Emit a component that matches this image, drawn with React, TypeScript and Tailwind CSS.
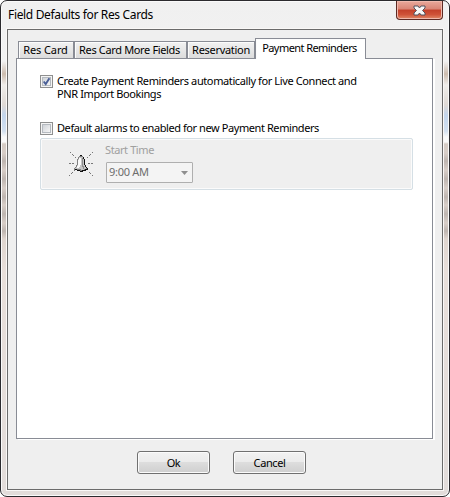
import React from "react";

const tabBase =
  "relative flex items-start justify-center whitespace-nowrap border border-b-0 border-[#898c95] shadow-[inset_1px_1px_0_#fcfcfc]";
const idle = "mb-px h-[17px] pt-px bg-linear-to-b from-[#f2f2f2] to-[#dcdcdc]";

function Tab({ label, className, text }: { label: string; className: string; text: string }) {
  return (
    <button className={`${tabBase} ${className}`}>
      <span className={text}>{label}</span>
    </button>
  );
}

function Check({ checked }: { checked?: boolean }) {
  return (
    <span className="mt-px block h-[13px] w-[13px] shrink-0 border border-[#8e8f8f] bg-[#f4f4f4] p-px">
      <span className="block h-[9px] w-[9px] border border-[#b5bac0] bg-linear-to-br from-[#cfd3d8] to-[#f6f6f6]">
        {checked && (
          <svg viewBox="0 0 9 9" className="-m-px block h-[9px] w-[9px]" fill="none">
            <path d="M1.7 4.5 3.7 7 7.4 1.2" stroke="#4a5f97" strokeWidth="1.9" />
          </svg>
        )}
      </span>
    </span>
  );
}

function Bell() {
  return (
    <svg width="25" height="25" viewBox="0 0 25 25" shapeRendering="crispEdges">
      <path
        fill="#777"
        d="M2 1h1v1H2zM4 3h1v1H4zM5 4h1v1H5zM7 6h1v1H7zM24 1h1v1h-1zM22 3h1v1h-1zM21 4h1v1h-1zM19 6h1v1h-1zM1 24h1v1H1zM3 22h1v1H3zM4 21h1v1H4zM6 19h1v1H6zM24 24h1v1h-1zM22 22h1v1h-1zM21 21h1v1h-1zM1 12h2v1H1zM4 12h2v1H4zM20 12h2v1h-2zM23 12h2v1h-2z"
      />
      <path
        fill="#808080"
        d="M12 4h2v1h1v1h1v2h1v6h1v2h1v1h1v2h-2v1h-3v1h-3v-1H9v-1H6v-2h1v-1h1v-2h1V8h1V6h1V5h1z"
      />
      <path fill="#c4c4c4" d="M11 6h4v2h1v6h1v2h1v2h-2v1h-3v-1H7v-1h1v-1h1v-2h1V8h1z" />
      <path fill="#fafafa" d="M11 7h2v7h-1v2h-1v1H9v-2h1V9h1z" />
      <path fill="#8c8c8c" d="M14 7h1v9h-1zM15 15h1v3h-1z" />
      <path
        fill="#111"
        d="M12 4h2v1h-2zM15 6h1v2h-1zM16 8h1v6h-1zM17 14h1v2h-1zM18 16h1v1h-1zM19 17h1v2h-2v1h-3v1h-3v-1H9v-1H7v-1h2v1h3v1h2v-1h3v-1h2z"
      />
    </svg>
  );
}

const btn =
  "flex h-[23px] w-[73px] items-center justify-center rounded-[3px] border border-[#707070] bg-[linear-gradient(#f2f2f2_0%,#ebebeb_48%,#dddddd_50%,#cfcfcf_100%)] shadow-[inset_0_0_0_1px_#fbfbfb]";

export default function App() {
  return (
    <div className="h-[497px] w-[450px] overflow-hidden bg-white font-['Noto_Sans','Liberation_Sans',sans-serif] text-[11px] leading-[13px] text-black">
      <div className="flex h-[497px] w-[450px] flex-col rounded-[7px] border border-[#2b2a2e] bg-[linear-gradient(#f0f0f0_0px,#f2f2f2_60px,#cdbcae_73px,#f0eeeb_84px,#dfd9d5_104px,#c3d5ec_114px,#d3e0ef_130px,#fafafa_136px,#fafafa_141px,#d5cbc4_143px,#d8cec8_152px,#beb5b0_160px,#d8cec8_169px,#beb5b0_178px,#d8cec8_187px,#beb5b0_196px,#d8cec8_204px,#beb5b0_213px,#d8cec8_222px,#beb5b0_230px,#dfd5cf_238px,#e8dfda_270px,#e2dcda_496px)] px-[6px] pb-[6px] shadow-[inset_0_0_0_1px_#fafafa]">
        <header className="flex h-[28px] items-start justify-between">
          <h1 className="pt-[6px] pl-px text-[12px] leading-[16px] tracking-[-0.34px] whitespace-nowrap">
            Field Defaults for Res Cards
          </h1>
          <button className="flex h-[19px] w-[47px] items-center justify-center rounded-b-[4px] border border-t-0 border-[#5c2a24] bg-[linear-gradient(#e9a99c_0%,#d98575_45%,#c3402a_50%,#cf5238_75%,#e08a68_100%)] shadow-[inset_0_0_0_1px_#f0b9ad]">
            <svg width="13" height="11" viewBox="0 0 13 11">
              <path d="M1 1h4l1.5 2L8 1h4v2L9.5 5.5 12 8v2H8L6.5 8 5 10H1V8l2.5-2.5L1 3z" fill="#f7f7f7" stroke="#53535f" strokeWidth="1" strokeLinejoin="round" />
            </svg>
          </button>
        </header>
        <main className="flex h-[461px] w-[436px] flex-col border border-[#6b6b6b] bg-[#efefef] px-[8px] pt-[8px] shadow-[0_0_0_1px_#faf8f7]">
          <nav className="z-10 -mb-px flex h-[21px] items-end pl-[2px]">
            <Tab label="Res Card" text="tracking-[-0.1px]" className={`${idle} w-[56px] pr-px`} />
            <Tab label="Res Card More Fields" text="tracking-[-0.35px]" className={`${idle} w-[113px] pr-[2px]`} />
            <Tab label="Reservation" text="tracking-[-0.3px]" className={`${idle} w-[68px]`} />
            <Tab
              label="Payment Reminders"
              text="tracking-[-0.57px]"
              className="h-[21px] w-[111px] bg-white pt-[2px] pr-[2px]"
            />
          </nav>
          <section className="h-[381px] w-[417px] border border-[#898c95] bg-white pt-[15px] pl-[23px] shadow-[2px_1px_0_#fff]">
            <label className="flex items-start gap-[4px]">
              <Check checked />
              <span className="tracking-[-0.39px] whitespace-nowrap">
                Create Payment Reminders automatically for Live Connect and
                <br />
                PNR Import Bookings
              </span>
            </label>
            <label className="mt-[21px] flex items-start gap-[4px]">
              <Check />
              <span className="tracking-[-0.42px] whitespace-nowrap">
                Default alarms to enabled for new Payment Reminders
              </span>
            </label>
            <div className="mt-[3px] flex h-[52px] w-[373px] rounded-[2px] border border-[#d5dfe5] bg-[#efefef] pt-[4px] pl-[27px] shadow-[inset_0_0_0_1px_#fbfbfb]">
              <div className="mt-[8px]">
                <Bell />
              </div>
              <div className="ml-[13px] text-[#a0a0a0]">
                <div className="-ml-px tracking-[-0.4px]">Start Time</div>
                <div className="mt-[6px] flex h-[21px] w-[87px] items-start justify-between rounded-[1px] border border-[#afafaf] bg-[#f4f4f4] pt-[2px] pr-[4px] pl-[2px] text-[#6d6d6d]">
                  <span className="tracking-[-0.3px]">9:00 AM</span>
                  <svg className="mt-[6px]" width="7" height="4" viewBox="0 0 7 4">
                    <path d="M0 0h7L3.5 4z" fill="#8f8f8f" />
                  </svg>
                </div>
              </div>
            </div>
          </section>
          <footer className="mt-[12px] flex gap-[23px] pl-[121px] tracking-[-0.4px]">
            <button className={btn}>Ok</button>
            <button className={btn}>Cancel</button>
          </footer>
        </main>
      </div>
    </div>
  );
}
